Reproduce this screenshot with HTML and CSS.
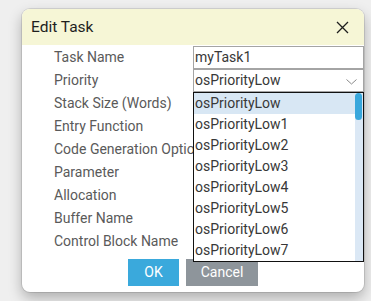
FILE: index.html
```html
<!DOCTYPE html>
<html>
<head>
<meta charset="utf-8">
<link rel="stylesheet" href="styles.css">
</head>
<body>
<div class="dialog">
  <div class="header">
    <span class="title">Edit Task</span>
    <svg class="close" width="13" height="13" viewBox="0 0 13 13"><path d="M1 1 L12 12 M12 1 L1 12" stroke="#1e1e1e" stroke-width="1.3" fill="none"/></svg>
  </div>
  <div class="form">
    <div class="label">Task Name</div>
    <div class="cell"><div class="field">myTask1</div></div>
    <div class="label">Priority</div>
    <div class="cell">
      <div class="field select">osPriorityLow
        <svg class="chev" width="11" height="6" viewBox="0 0 11 6"><path d="M0.5 0.5 L5.5 5 L10.5 0.5" stroke="#8a8a8a" stroke-width="1" fill="none"/></svg>
      </div>
      <div class="list">
        <div class="items">
          <div class="item sel">osPriorityLow</div>
          <div class="item">osPriorityLow1</div>
          <div class="item">osPriorityLow2</div>
          <div class="item">osPriorityLow3</div>
          <div class="item">osPriorityLow4</div>
          <div class="item">osPriorityLow5</div>
          <div class="item">osPriorityLow6</div>
          <div class="item">osPriorityLow7</div>
        </div>
        <div class="track"><div class="thumb"></div></div>
      </div>
    </div>
    <div class="label">Stack Size (Words)</div>
    <div class="cell"></div>
    <div class="label">Entry Function</div>
    <div class="cell"></div>
    <div class="label">Code Generation Options</div>
    <div class="cell"></div>
    <div class="label">Parameter</div>
    <div class="cell"></div>
    <div class="label">Allocation</div>
    <div class="cell"></div>
    <div class="label">Buffer Name</div>
    <div class="cell"></div>
    <div class="label">Control Block Name</div>
    <div class="cell"></div>
  </div>
  <div class="buttons">
    <div class="btn ok">OK</div>
    <div class="btn cancel">Cancel</div>
  </div>
</div>
</body>
</html>
```
FILE: styles.css
```css
html, body {
  margin: 0;
  height: 100%;
}
body {
  background: #efefef;
  padding: 9px 0 0 22px;
  box-sizing: border-box;
  font-family: Roboto, "Liberation Sans", sans-serif;
  overflow: hidden;
}
.dialog {
  width: 342px;
  height: 283px;
  background: #fff;
  border-radius: 8px;
  box-shadow: 0 0 0 1px rgba(0,0,0,0.10), 0 6px 14px rgba(0,0,0,0.28);
  display: flex;
  flex-direction: column;
  overflow: hidden;
}
.header {
  height: 36px;
  flex: none;
  background: #f6f6d6;
  display: flex;
  align-items: center;
  justify-content: space-between;
  padding: 0 15px 0 9px;
}
.title {
  font-size: 15.5px;
  color: #1e1e1e;
}
.close {
  display: block;
  margin-top: 1px;
}
.form {
  margin-top: 1px;
  display: grid;
  grid-template-columns: 171px 171px;
  grid-auto-rows: 23px;
}
.label {
  padding-left: 32px;
  font-size: 14px;
  color: #5a5a5a;
  white-space: nowrap;
  overflow: hidden;
  text-overflow: clip;
  line-height: 23px;
}
.cell {
  position: relative;
}
.field {
  height: 23px;
  box-sizing: border-box;
  border: 1px solid #a4a4a4;
  font-size: 14px;
  color: #383838;
  line-height: 21px;
  padding-left: 1px;
  position: relative;
  background: #fff;
}
.chev {
  position: absolute;
  right: 6px;
  top: 9px;
}
.list {
  position: absolute;
  top: 23px;
  left: 0;
  width: 171px;
  height: 170px;
  box-sizing: border-box;
  border: 1px solid #111;
  background: #fff;
  z-index: 5;
  display: flex;
}
.items {
  flex: 1;
}
.item {
  height: 21px;
  line-height: 21px;
  font-size: 14px;
  color: #383838;
  padding-left: 1px;
}
.item.sel {
  background: #d8e7f4;
}
.track {
  width: 8px;
  background: #dbe8f5;
  position: relative;
}
.thumb {
  position: absolute;
  top: 0;
  left: 0;
  width: 7px;
  height: 27px;
  border-radius: 4px;
  background: #38a7dc;
}
.buttons {
  display: flex;
  justify-content: center;
  gap: 7px;
  margin-top: 6px;
}
.btn {
  height: 27px;
  line-height: 27px;
  color: #fff;
  font-size: 14px;
  text-align: center;
}
.ok {
  width: 51px;
  background: #3aa9dc;
}
.cancel {
  width: 72px;
  background: #8e959b;
}
```
